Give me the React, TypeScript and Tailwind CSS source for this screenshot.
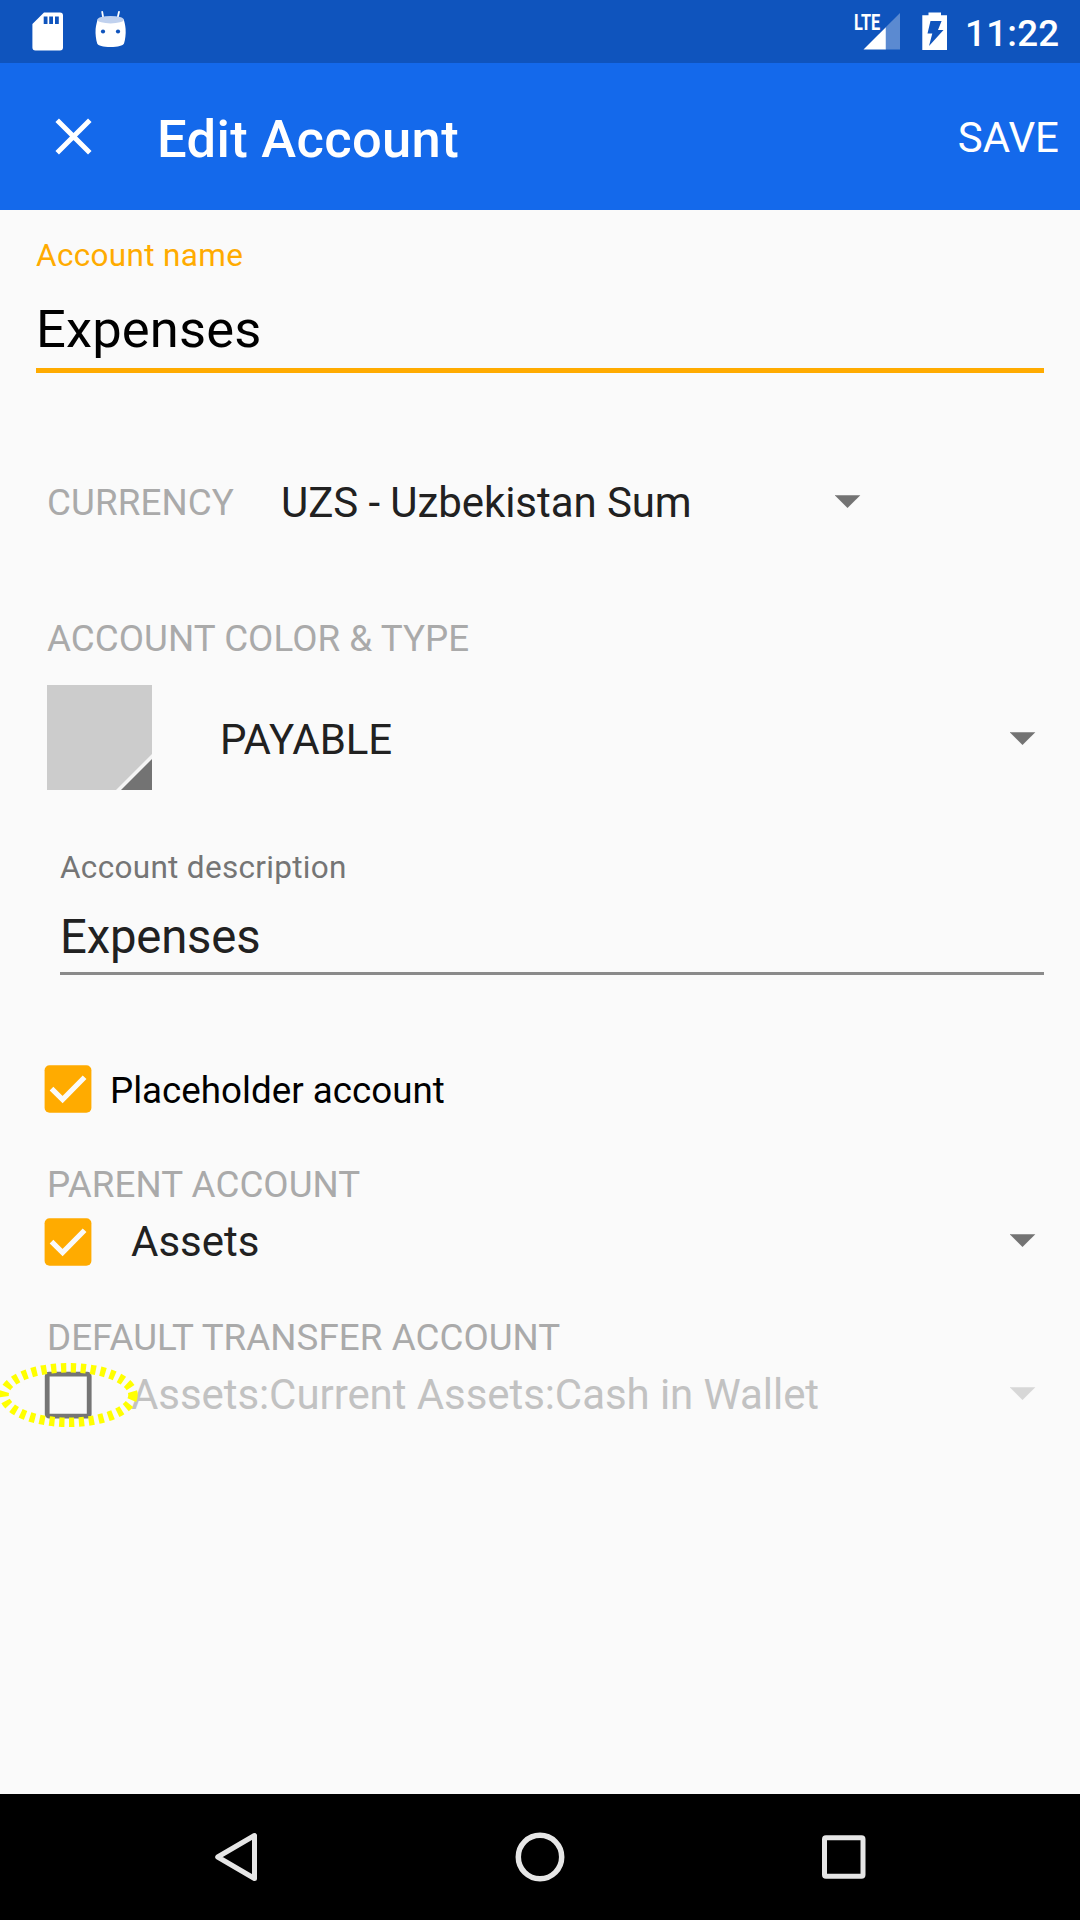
import React from "react";

function Arrow({ faded = false }: { faded?: boolean }) {
  return (
    <svg
      className={faded ? "h-[13px] w-[26px] shrink-0 text-[#d7d7d7]" : "h-[13px] w-[26px] shrink-0 text-[#737373]"}
      viewBox="0 0 26 13"
      fill="currentColor"
    >
      <path d="M-0.300 0.200H25.300L12.500 13Z" />
    </svg>
  );
}

function CheckedBox() {
  return (
    <svg className="h-12 w-12 shrink-0" viewBox="0 0 48 48">
      <rect x="0.6" y="0.200" width="46.8" height="47.600" rx="5" fill="#ffab00" />
      <path d="M7.500 23.6L18.600 34.6L40.600 12.2" fill="none" stroke="#fafafa" strokeWidth="5.2" />
    </svg>
  );
}

function EmptyBox() {
  return (
    <svg className="h-12 w-12 shrink-0" viewBox="0 0 48 48">
      <rect x="3.200" y="3.200" width="42" height="42" rx="2" fill="none" stroke="#757575" strokeWidth="4.8" />
    </svg>
  );
}

function SectionLabel({ children }: { children: React.ReactNode }) {
  return (
    <div className="h-[44px] pl-[47px] text-[36.75px] leading-[44px] tracking-[0.05px] text-[#aaaaaa]">{children}</div>
  );
}

function StatusBar() {
  return (
    <div className="flex h-[63px] items-start bg-[#0f54bd] text-white">
      <svg className="ml-8 mt-3 h-[39px] w-8" viewBox="0 0 32 39">
        <path
          fillRule="evenodd"
          fill="#fff"
          d="M12 0.4H28Q31 0.4 31 3.4V35.500Q31 38.500 28 38.500H3.400Q0.400 38.500 0.400 35.500V12ZM11.700 4.400V12H15.500V4.400ZM17.200 4.400V12H21V4.400ZM23 4.400V12H26.800V4.400Z"
        />
      </svg>
      <svg className="ml-[30px] mt-[10px] h-[38px] w-[34px]" viewBox="0 0 34 38">
        <path d="M8.200 1.800L9.400 9M25 1.800L23.400 9" stroke="#fff" strokeWidth="1.800" strokeLinecap="round" />
        <path d="M3.500 9.500C3 12 2 15 1.600 19C1.200 24 2.100 30 3.200 33.500C4 35.600 9 37 16.600 37C24 37 29 35.600 30 33.500C31.200 30 32 24 31.600 19C31.400 15 30.400 12 29.800 9.500Z" fill="#fff" />
        <ellipse cx="16.600" cy="9.700" rx="13.200" ry="3.700" fill="#c0d1ee" />
        <circle cx="9" cy="21.500" r="2.100" fill="#0f54bd" />
        <circle cx="24" cy="21.500" r="2.100" fill="#0f54bd" />
      </svg>
      <div className="relative ml-auto mt-3 h-[38px] w-[48px]">
        <svg className="h-[38px] w-[48px]" viewBox="0 0 48 38">
          <path d="M46 1V37.600H31.700V15.200Z" fill="#5b8ad1" />
          <path d="M31.800 15.200V37.600H9.500Z" fill="#fff" />
        </svg>
        <span className="absolute left-0 top-px origin-left scale-x-[0.74] text-[22px] font-bold leading-[19px]">LTE</span>
      </div>
      <svg className="ml-[20px] mt-3 h-[38px] w-[26px]" viewBox="0 0 26 38">
        <path d="M0.300 3.200H6.500V0.400H19V3.200H25V38H0.300Z" fill="#fff" />
        <path d="M8.500 8.900H19.600L16 17.900H21.500L7 34L10.300 21.500H5.500Z" fill="#0f54bd" />
      </svg>
      <span className="ml-[17px] mr-[20.500px] mt-[2px] text-[36.75px] font-medium leading-[63px] tracking-[0.25px]">11:22</span>
    </div>
  );
}

export default function App() {
  return (
    <div className="flex h-[1920px] w-[1080px] flex-col overflow-hidden bg-[#fafafa] font-['Roboto',sans-serif]">
      <StatusBar />
      <header className="flex h-[147px] items-center bg-[#1469eb] pl-[55px] pr-[21px] text-white">
        <svg className="h-[37px] w-[37px]" viewBox="0 0 37 37">
          <path d="M2.200 2.200L34.800 34.800M34.800 2.200L2.200 34.800" stroke="#fff" strokeWidth="5" />
        </svg>
        <h1 className="ml-[65px] mt-[4px] text-[52.5px] font-medium leading-[62px] tracking-[0.33px]">Edit Account</h1>
        <span className="ml-auto mt-[2px] text-[42px] leading-[50px]">SAVE</span>
      </header>

      <main className="flex flex-1 flex-col">
        <label className="mt-[27px] h-[38px] pl-9 text-[31.5px] leading-[38px] tracking-[0.34px] text-[#ffab00]">Account name</label>
        <div className="mx-9 mt-[23px] h-[75px] border-b-[5px] border-[#ffab00] text-[52.5px] leading-[63px] tracking-[0.15px] text-black">Expenses</div>

        <div className="mt-[97px] flex h-[64px] items-center">
          <span className="mt-[2px] w-[234px] pl-[47px] text-[36.75px] tracking-[0.1px] text-[#aaaaaa]">CURRENCY</span>
          <span className="ml-[47px] w-[554px] text-[42px] tracking-[-0.07px] text-[#212121]">UZS - Uzbekistan Sum</span>
          <span className="-mt-px"><Arrow /></span>
        </div>

        <div className="mt-[83px]">
          <SectionLabel>ACCOUNT COLOR &amp; TYPE</SectionLabel>
        </div>
        <div className="mt-[24px] flex h-[105px] items-center pl-[47px] pr-[44px]">
          <svg className="h-[105px] w-[105px]" viewBox="0 0 105 105">
            <rect width="105" height="105" fill="#cccccc" />
            <path d="M105 69V105H69Z" fill="#f5f5f5" />
            <path d="M105 74V105H74Z" fill="#737373" />
          </svg>
          <span className="ml-[68px] mt-[4px] text-[42px] tracking-[-0.05px] text-[#212121]">PAYABLE</span>
          <span className="ml-auto mt-[2px]"><Arrow /></span>
        </div>

        <label className="mt-[59px] h-[38px] pl-[60px] text-[31.5px] leading-[38px] tracking-[0.31px] text-[#757575]">Account description</label>
        <div className="ml-[60px] mr-9 mt-[22px] h-[66px] border-b-[3px] border-[#8a8a8a] text-[47.25px] leading-[56px] tracking-[-0.18px] text-[#212121]">Expenses</div>

        <div className="mt-[90px] flex h-12 items-center pl-[44px]">
          <CheckedBox />
          <span className="ml-[18px] mt-[4px] text-[36.75px] text-black">Placeholder account</span>
        </div>

        <div className="mt-[50px]">
          <SectionLabel>PARENT ACCOUNT</SectionLabel>
        </div>
        <div className="mt-[11px] flex h-12 items-center pl-[44px] pr-[44px]">
          <CheckedBox />
          <span className="-mt-px ml-[39px] text-[42px] text-[#212121]">Assets</span>
          <span className="-mt-[3px] ml-auto"><Arrow /></span>
        </div>

        <div className="mt-[50px]">
          <SectionLabel>DEFAULT TRANSFER ACCOUNT</SectionLabel>
        </div>
        <div className="relative mt-[11px] flex h-12 items-center pl-[44px] pr-[44px]">
          <EmptyBox />
          <span className="-mt-[2px] ml-[39px] text-[42px] tracking-[-0.07px] text-[#c2c2c2]">Assets:Current Assets:Cash in Wallet</span>
          <span className="-mt-[3px] ml-auto"><Arrow faded /></span>
          <svg className="absolute left-0 top-[-10px] h-[68px] w-[140px]" viewBox="0 0 140 68">
            <ellipse cx="68.500" cy="34" rx="64.500" ry="27.300" fill="none" stroke="#ffff00" strokeWidth="9.500" strokeDasharray="5.300 4.580" />
          </svg>
        </div>
      </main>

      <nav className="flex h-[126px] items-center bg-black pl-[214px] pr-[214px]">
        <div className="flex w-full items-center justify-between">
          <svg className="h-[50px] w-[44px]" viewBox="0 0 44 50" fill="none" stroke="#e6e6e6" strokeWidth="5" strokeLinejoin="round">
            <path d="M40.500 3.500V46.500L3.700 25Z" />
          </svg>
          <svg className="h-[50px] w-[50px]" viewBox="0 0 50 50" fill="none" stroke="#e6e6e6" strokeWidth="5.500">
            <circle cx="25" cy="25" r="21.700" />
          </svg>
          <svg className="h-[44px] w-[44px]" viewBox="0 0 44 44" fill="none" stroke="#e6e6e6" strokeWidth="5">
            <rect x="2.500" y="2.800" width="38.500" height="38.500" rx="1.500" />
          </svg>
        </div>
      </nav>
    </div>
  );
}
